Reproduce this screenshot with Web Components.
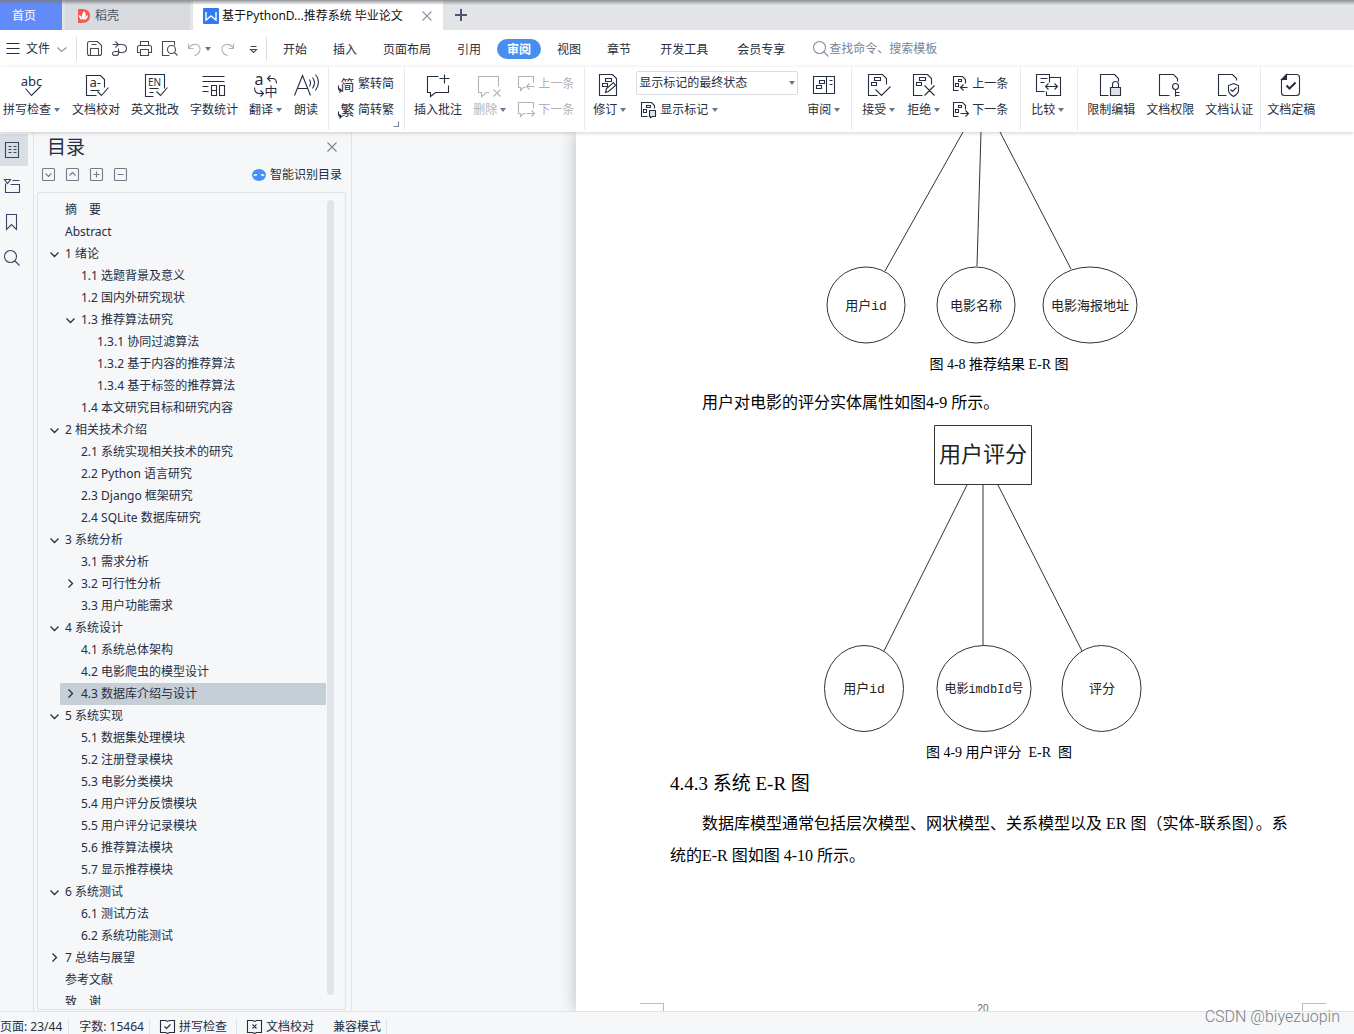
<!DOCTYPE html>
<html lang="zh-CN">
<head>
<meta charset="utf-8">
<title>WPS 文字</title>
<style>
html,body{margin:0;height:100%}
body{font:12px/18px "Noto Sans","Noto Sans CJK SC",sans-serif;color:#262e42;overflow:hidden;
--ink:#262e42;--line:#dfe2e9;--pane:#f5f7f9;--muted:#b1b4b9}
</style>
</head>
<body>
<wps-app></wps-app>
<script>
const BOX='M1 0h10q1 0 1 1v10q0 1-1 1H1q-1 0-1-1V1q0-1 1-1z';
const ICONS={
 abc:[24,'<text x="11" y="12" font-size="13" text-anchor="middle">abc</text><path d="M5 15l6 7 9-9"/>'],
 proof:[24,'<path d="M12 22H2V2h14l4 4v8M6 17h9M13 18l4 4 7-8"/><text x="5" y="13" font-size="13">a-</text>'],
 en:[24,'<path d="M10 23H2V1h19v14M6 15h9M6 19h4M13 18l4 4 7-8"/><text x="11" y="12" font-size="10" text-anchor="middle">EN</text>'],
 count:[24,'<path d="M0 3h22M0 8h22M0 13h6M0 18h6M9 12h5v10H9zM9 17h5M17 12h5v10h-5z"/>'],
 trans:[24,'<text x="0" y="11" font-size="16">a</text><text x="10" y="22" font-size="13">中</text><path d="M13 5h5q4 0 4 5M16 2l-3 3 3 3M0 14q0 6 5 6h4M6 17l3 3-3 3"/>'],
 read:[24,'<path d="M0 22L8 2l8 20M3 15h10M15 6q2 3 0 7M18 4q4 5 0 11M21 1q6 7 0 16"/>'],
 toSimp:[16,'<text x="2" y="13" font-size="14">简</text><path d="M0 9v3q0 2 3 2M1 12l2 2-2 2"/>'],
 toTrad:[16,'<text x="2" y="12" font-size="14">繁</text><path d="M0 9v3q0 2 3 2M1 12l2 2-2 2"/>'],
 note:[24,'<path d="M12 3H1v16h3v4l5-4h13v-7M18 1v9M13 5h10"/>'],
 noteDel:[24,'<path d="M11 19H8l-5 4v-4H0V3h20v10M15 16l7 7M22 16l-7 7"/>'],
 notePrev:[16,'<path d="M7 11H5l-3 3v-3H0V0h15v6M16 10H8M11 7l-3 3 3 3"/>'],
 noteNext:[16,'<path d="M7 11H5l-3 3v-3H0V0h15v6M8 11h8M13 8l3 3-3 3"/>'],
 revise:[24,'<path d="M1 1h13l4 4v17H1zM7 5h6v3H7zM4 10h5v3H4zM7 19l1-4 7-6 2 3-7 6z"/>'],
 marks:[16,'<path d="M7 14H1V0h10l3 3v3M6 3h4v2H6zM3 7h3v3H3z"/><path fill="#dfe3e9" d="M9 8h6v6h-3l-2 1v-1H9z"/>'],
 review:[24,'<path d="M1 3h21v17H1zM14 3v17M7 7h5v3H7zM4 12h5v3H4zM17 7h3M17 11h3"/>'],
 accept:[24,'<path d="M10 22H1V1h14l4 4v6M7 4h6v3H7zM4 9h5v3H4zM8 16l6 6 9-9"/>'],
 reject:[24,'<path d="M10 22H1V1h14l4 4v6M7 4h6v3H7zM4 9h5v3H4zM12 12l10 10M22 12L12 22"/>'],
 docPrev:[16,'<path d="M6 14H1V0h9l3 3v4M6 3h3v2H6zM3 7h3v3H3zM15 11H8M11 8l-3 3 3 3"/>'],
 docNext:[16,'<path d="M6 14H1V0h9l3 3v4M6 3h3v2H6zM3 7h3v3H3zM8 11h8M13 8l3 3-3 3"/>'],
 compare:[24,'<path d="M8 18H0V1h13v3M4 5h7M4 9h4M10 18v4h14V4H13v5M9 13h12M12 10l-3 3 3 3M18 10l3 3-3 3"/>'],
 lock:[24,'<path d="M9 22H1V1h14l4 4v3M13 14v-3q0-3 3-3t3 3v3"/><path fill="#dfe3e9" d="M11 14h10v8H11z"/>'],
 key:[24,'<path d="M11 22H1V1h14l4 4v3"/><circle cx="17" cy="13" r="3"/><path d="M17 16v7M17 19h4M17 22h4"/>'],
 cert:[24,'<path d="M9 22H1V1h14l4 4v2M16 10l5 2v5q0 3-5 6-5-3-5-6v-5zM13 16l2 2 4-4"/>'],
 final:[24,'<path d="M7 1h10q3 0 3 3v15q0 3-3 3H5q-3 0-3-3V7z"/><path fill="currentColor" d="M7 1v5H2z"/><path stroke-width="2" d="M7 12l3 3 6-6"/>'],
 save:[16,'<path d="M0 2q0-2 2-2h8l4 4v8q0 2-2 2H2q-2 0-2-2zM3 14V7h8v7M4 3h5"/>'],
 link:[16,'<path d="M0 3h9q5 0 5 4t-5 4H6M3 0l3 3-3 3M6 7v5q0 2-3 2t-3-2 3-2h4"/>'],
 print:[16,'<path d="M3 4V0h8v4M3 11H0V6q0-2 2-2h10q2 0 2 2v5h-3M3 8h8v6H3z"/>'],
 preview:[16,'<path d="M7 14H0V0h12v4"/><circle cx="9" cy="8" r="4"/><path d="M12 11l3 3"/>'],
 undo:[16,'<path d="M1 2v5h5M1 7q3-5 8-4 5 2 3 7-1 3-5 4"/>'],
 redo:[16,'<path d="M12 2v5H7M12 7Q9 2 4 3q-5 2-3 7 1 3 5 4"/>'],
 more:[16,'<path d="M4 5h6M4 8h6l-3 3z"/>'],
 menu:[16,'<path d="M1 2h13M1 7h13M1 12h13"/>'],
 chev:[12,'<path d="M1 4l4 4 5-4"/>'],
 down:[12,'<path stroke-width="1.3" d="M1 4l4 4 4-4"/>'],
 right:[12,'<path stroke-width="1.3" d="M3 1l4 4-4 4"/>'],
 find:[16,'<circle cx="6" cy="6" r="6"/><path d="M10 10l5 5"/>'],
 close:[12,'<path d="M1 1l9 9M10 1l-9 9"/>'],
 plus:[12,'<path stroke-width="2" d="M6 0v12M0 6h12"/>',1],
 word:[16,'<rect width="16" height="16" rx="1" fill="#2f7bf2" stroke="none"/><path stroke="#fff" stroke-width="1.4" d="M3 4v8l5-4 5 4V4"/>',1],
 docer:[14,'<path fill="#f4594c" stroke="none" d="M1 0h4q8 0 8 7t-8 7H1z"/><path fill="#fff" stroke="none" d="M7 2q3 3 1 6-1 2-2 3-3-4 1-9zM2 6q3 1 3 5-3-1-3-5zM11 6q0 4-4 5 0-3 4-5z"/>',1],
 toc:[16,'<path d="M1 0h13v15H1zM4 4h3M9 4h3M4 7h3M9 7h3M4 10h3M9 10h3"/>'],
 chapter:[16,'<path d="M0 1h6L3 5zM8 2h7M1 5v9h14V6H6"/>'],
 mark:[16,'<path d="M2 0h10v15l-5-5-5 5z"/>'],
 cDown:[14,`<path d="${BOX}M3 5l3 3 3-3"/>`],
 cUp:[14,`<path d="${BOX}M3 7l3-3 3 3"/>`],
 cPlus:[14,`<path d="${BOX}M3 6h6M6 3v6"/>`],
 cMinus:[14,`<path d="${BOX}M3 6h6"/>`],
 smart:[14,'<ellipse cx="7" cy="7" rx="7" ry="6" fill="#4391f3" stroke="none"/><path stroke="#fff" stroke-width="1.5" d="M2 8q1-2 3-1M9 7q2-1 3 1"/>',1],
 okBox:[16,'<path d="M0 1h5l2 1 2-1h5v12H9l-2 1-2-1H0zM4 7l2 2 4-4"/>'],
 noBox:[16,'<path d="M0 1h5l2 1 2-1h5v12H9l-2 1-2-1H0zM5 5l4 4M9 5l-4 4"/>'],
 corner:[8,'<path d="M6 1v5H1"/>']
};
const BTN='button{font:inherit;color:inherit;background:none;border:0;padding:0;margin:0;text-align:left;white-space:nowrap}';
function define(name,css,html){
  customElements.define(name,class extends HTMLElement{
    constructor(){super();this.attachShadow({mode:'open'})}
    connectedCallback(){this.shadowRoot.innerHTML='<style>*{box-sizing:border-box}'+BTN+css+'</style>'+(typeof html==='function'?html(this):html)}
  });
}
/* Line icons are drawn on whole units and shifted by half a unit so that hairlines stay crisp. */
define('ui-icon',':host{display:block;flex:none}svg{display:block;overflow:visible}text{fill:currentColor;stroke:none;font-family:"Noto Sans","Noto Sans CJK SC",sans-serif}',
 e=>{const[s,b,solid]=ICONS[e.getAttribute('name')];return `<svg width="${s}" height="${s}" viewBox="0 0 ${s} ${s}" fill="none" stroke="currentColor" stroke-width="1.1" aria-hidden="true"><g${solid?'':' transform="translate(.5 .5)"'}>${b}</g></svg>`});
define('ui-arrow',':host{display:block;flex:none;width:7px}i{display:block;width:0;border:3px solid transparent;border-top:4px solid #6c778c;border-bottom:0}','<i></i>');

define('app-tabs',`:host{display:flex;height:30px;background:#e2e4e8;position:relative;flex:none}
:host::after{content:"";position:absolute;inset:0 0 auto;height:5px;background:linear-gradient(#77797dcc,#8a8c9000)}
button{display:flex;align-items:center;height:30px;padding-top:2px}
.home{width:62px;padding-left:12px;background:#628bfa;color:#fff;margin-right:3px}
.docer{width:125px;padding-left:12px;gap:4px;background:#d8dadf;color:#4a5262;margin-right:3px}
.doc{width:250px;padding:2px 10px 0;gap:3px;background:#fff;color:#111}
.doc span{flex:1}.doc ui-icon:last-child{color:#8c96aa}
.new{padding:0 12px;color:#4b5670}`,
`<button class="home">首页</button><button class="docer"><ui-icon name="docer"></ui-icon>稻壳</button>
<button class="doc"><ui-icon name="word"></ui-icon><span>基于PythonD...推荐系统 毕业论文</span><ui-icon name="close"></ui-icon></button>
<button class="new" aria-label="新建"><ui-icon name="plus"></ui-icon></button>`);

define('menu-bar',`:host{display:flex;align-items:center;height:37px;background:#fff;flex:none;padding-left:5px}
.file{display:flex;align-items:center;gap:5px;line-height:20px}.file ui-icon:last-child{color:#8c93a0;margin-left:1px}
.sep{width:1px;height:24px;background:#dcdfe5}.file+.sep{margin-left:8px}
.quick{display:flex;align-items:center;gap:9px;padding:0 4px 0 10px;color:#454b58}
.undo{display:flex;align-items:center;gap:2px;color:var(--muted)}.off{color:var(--muted)}
nav{display:flex;gap:6px;padding-left:6px}
nav button{height:20px;padding:0 10px;border-radius:10px;line-height:22px}
nav .on{background:#468ff0;color:#fff;font-weight:700}
nav .wide{margin-left:3px}
label{display:flex;align-items:center;color:#8791a5;margin-left:18px}
input{font:inherit;border:0;padding:0;width:160px;background:none;outline:0}input::placeholder{color:#78839a;opacity:1}`,
`<button class="file"><ui-icon name="menu"></ui-icon>文件<ui-icon name="chev"></ui-icon></button><div class="sep"></div>
<div class="quick"><button aria-label="保存"><ui-icon name="save"></ui-icon></button><button aria-label="输出"><ui-icon name="link"></ui-icon></button><button aria-label="打印"><ui-icon name="print"></ui-icon></button><button aria-label="预览"><ui-icon name="preview"></ui-icon></button>
<button class="undo" aria-label="撤销"><ui-icon name="undo"></ui-icon><ui-arrow></ui-arrow></button><button class="off" aria-label="恢复"><ui-icon name="redo"></ui-icon></button><button aria-label="更多"><ui-icon name="more"></ui-icon></button></div><div class="sep"></div>
<nav><button>开始</button><button>插入</button><button>页面布局</button><button>引用</button><button class="on">审阅</button><button>视图</button><button>章节</button><button class="wide">开发工具</button><button class="wide">会员专享</button></nav>
<label><ui-icon name="find"></ui-icon><input type="search" placeholder="查找命令、搜索模板" aria-label="查找命令、搜索模板"></label>`);

define('big-tool',`:host{display:block;flex:none}:host([off]){color:var(--muted)}
button{display:flex;flex-direction:column;align-items:center;gap:4px}span{display:flex;align-items:center;gap:3px}`,
 e=>`<button><ui-icon name="${e.getAttribute('icon')}"></ui-icon><span><slot></slot>${e.hasAttribute('menu')?'<ui-arrow></ui-arrow>':''}</span></button>`);
define('small-tool',`:host{display:block}:host([off]){color:var(--muted)}button{display:flex;align-items:center;gap:4px;height:26px}`,
 e=>`<button><ui-icon name="${e.getAttribute('icon')}"></ui-icon><slot></slot>${e.hasAttribute('menu')?'<ui-arrow></ui-arrow>':''}</button>`);
define('tool-group',`:host{display:flex;position:relative;gap:11px;height:62px;padding:5px 10px 0 9px;border-right:1px solid #e7e9ed;flex:none}
:host([first]){padding-left:3px}:host([last]){border:0;padding-left:6px}:host([loose]){padding-left:10px;padding-right:12px}:host([cert]){padding-left:9px;padding-right:7px}:host([mid]){gap:9px;padding-left:8px}
:host([corner]) .c{position:absolute;right:4px;bottom:2px;color:#7b8497}`,
 e=>`<slot></slot>${e.hasAttribute('corner')?'<ui-icon class="c" name="corner"></ui-icon>':''}`);
define('tool-stack',':host{display:flex;flex-direction:column;margin-top:-2px}','<slot></slot>');
define('mark-select',`:host{display:flex;align-items:center;position:relative;width:162px;height:24px;margin-bottom:2px}
select{appearance:none;font:inherit;color:inherit;width:100%;height:24px;border:1px solid #d9dce3;border-radius:2px;background:#fff;padding:0 20px 0 2px}
ui-arrow{position:absolute;right:2px;pointer-events:none}`,
 '<select aria-label="标记显示方式"><option>显示标记的最终状态</option><option>最终状态</option></select><ui-arrow></ui-arrow>');

define('tool-ribbon',`:host{display:flex;height:65px;padding-top:1px;background:#fff;box-shadow:0 1px 4px #0000002e;position:relative;z-index:2;flex:none}.pad{padding-left:4px}`,
`<tool-group first><big-tool icon="abc" menu>拼写检查</big-tool><big-tool icon="proof">文档校对</big-tool><big-tool icon="en">英文批改</big-tool><big-tool icon="count">字数统计</big-tool><big-tool icon="trans" menu>翻译</big-tool><big-tool icon="read">朗读</big-tool></tool-group>
<tool-group corner><tool-stack><small-tool icon="toSimp">繁转简</small-tool><small-tool icon="toTrad">简转繁</small-tool></tool-stack></tool-group>
<tool-group><big-tool icon="note">插入批注</big-tool><big-tool icon="noteDel" menu off>删除</big-tool><tool-stack><small-tool icon="notePrev" off>上一条</small-tool><small-tool icon="noteNext" off>下一条</small-tool></tool-stack></tool-group>
<tool-group mid><big-tool icon="revise" menu>修订</big-tool><tool-stack><mark-select></mark-select><small-tool class="pad" icon="marks" menu>显示标记</small-tool></tool-stack><big-tool icon="review" menu>审阅</big-tool></tool-group>
<tool-group loose><big-tool icon="accept" menu>接受</big-tool><big-tool icon="reject" menu>拒绝</big-tool><tool-stack><small-tool icon="docPrev">上一条</small-tool><small-tool icon="docNext">下一条</small-tool></tool-stack></tool-group>
<tool-group loose><big-tool icon="compare" menu>比较</big-tool></tool-group>
<tool-group cert><big-tool icon="lock">限制编辑</big-tool><big-tool icon="key">文档权限</big-tool><big-tool icon="cert">文档认证</big-tool></tool-group>
<tool-group last><big-tool icon="final">文档定稿</big-tool></tool-group>`);

define('side-rail',`:host{display:flex;flex-direction:column;gap:4px;width:34px;padding-top:2px;background:var(--pane);border-right:1px solid var(--line);flex:none}
button{display:flex;align-items:center;height:32px;width:28px;padding-left:4px;color:#3a4560}.on{background:#d9dee5}`,
`<button class="on" aria-label="目录"><ui-icon name="toc"></ui-icon></button><button aria-label="章节"><ui-icon name="chapter"></ui-icon></button><button aria-label="书签"><ui-icon name="mark"></ui-icon></button><button aria-label="查找"><ui-icon name="find"></ui-icon></button>`);

define('toc-item',`:host{display:block;flex:none}
button{display:flex;align-items:center;gap:4px;width:100%;height:22px;padding-left:5px;white-space:pre}
:host([level="0"]){margin-left:6px}:host([level="1"]){margin-left:22px}:host([level="2"]){margin-left:38px}
:host([selected]) button{background:#c6ced6}i{width:12px}`,
 e=>{const s=e.getAttribute('state');return `<button>${s?`<ui-icon name="${s}"></ui-icon>`:'<i></i>'}<slot></slot></button>`});
const TOC=[[0,'','摘　要'],[0,'','Abstract'],[0,'down','1 绪论'],[1,'','1.1 选题背景及意义'],[1,'','1.2 国内外研究现状'],[1,'down','1.3 推荐算法研究'],[2,'','1.3.1 协同过滤算法'],[2,'','1.3.2 基于内容的推荐算法'],[2,'','1.3.4 基于标签的推荐算法'],[1,'','1.4 本文研究目标和研究内容'],[0,'down','2 相关技术介绍'],[1,'','2.1 系统实现相关技术的研究'],[1,'','2.2 Python 语言研究'],[1,'','2.3 Django 框架研究'],[1,'','2.4 SQLite 数据库研究'],[0,'down','3 系统分析'],[1,'','3.1 需求分析'],[1,'right','3.2 可行性分析'],[1,'','3.3 用户功能需求'],[0,'down','4 系统设计'],[1,'','4.1 系统总体架构'],[1,'','4.2 电影爬虫的模型设计'],[1,'right','4.3 数据库介绍与设计',1],[0,'down','5 系统实现'],[1,'','5.1 数据集处理模块'],[1,'','5.2 注册登录模块'],[1,'','5.3 电影分类模块'],[1,'','5.4 用户评分反馈模块'],[1,'','5.5 用户评分记录模块'],[1,'','5.6 推荐算法模块'],[1,'','5.7 显示推荐模块'],[0,'down','6 系统测试'],[1,'','6.1 测试方法'],[1,'','6.2 系统功能测试'],[0,'right','7 总结与展望'],[0,'','参考文献'],[0,'','致　谢']];
define('toc-pane',`:host{display:flex;flex-direction:column;width:318px;padding:0 5px 0 3px;background:var(--pane);border-right:1px solid var(--line);flex:none;min-height:0}
header{display:flex;align-items:center;justify-content:space-between;height:30px;padding:0 8px 0 10px}
h2{margin:0;font-size:19px;line-height:28px;font-weight:400}header ui-icon{color:#7b8496}
.bar{display:flex;align-items:center;gap:10px;height:30px;padding:0 4px 5px 5px;color:#737a88}
.bar .smart{display:flex;align-items:center;gap:4px;margin-left:auto;color:var(--ink)}
.box{flex:1;min-height:0;display:flex;border:1px solid var(--line);border-radius:2px;padding:6px 11px 4px 0;margin-bottom:1px}
.list{flex:1;display:flex;flex-direction:column;overflow:hidden}
.thumb{width:7px;margin:1px 0 10px 1px;background:#e2e4eb;border-radius:4px}`,
`<header><h2>目录</h2><button aria-label="关闭"><ui-icon name="close"></ui-icon></button></header>
<div class="bar"><button aria-label="展开"><ui-icon name="cDown"></ui-icon></button><button aria-label="收起"><ui-icon name="cUp"></ui-icon></button><button aria-label="增加"><ui-icon name="cPlus"></ui-icon></button><button aria-label="减少"><ui-icon name="cMinus"></ui-icon></button><button class="smart"><ui-icon name="smart"></ui-icon>智能识别目录</button></div>
<div class="box"><div class="list">${TOC.map(([l,s,t,on])=>`<toc-item level="${l}" state="${s}"${on?' selected':''}>${t}</toc-item>`).join('')}</div><div class="thumb"></div></div>`);

define('er-diagram',`:host{display:block}svg{display:block;width:100%;fill:none;stroke:#333}text{fill:#222;stroke:none;text-anchor:middle;font:13px "Liberation Mono","Noto Sans CJK SC",sans-serif}.t{font-size:22px}.s{font-size:12px}`,
 e=>e.getAttribute('kind')==='result'?
`<svg viewBox="664 132 638 217"><path d="M963 132L885 271M981 132L977 266M1000 132L1071 269"/><ellipse cx="866" cy="305" rx="39" ry="38"/><ellipse cx="976" cy="305" rx="39" ry="38"/><ellipse cx="1090" cy="305" rx="47" ry="38"/><text x="866" y="310">用户id</text><text x="976" y="310">电影名称</text><text x="1090" y="310">电影海报地址</text></svg>`:
`<svg viewBox="664 419 638 318"><path d="M934.5 425.5h97v59h-97zM967 485L884 651M983 485V645M998 485L1082 651"/><ellipse cx="864" cy="688.5" rx="39.5" ry="43"/><ellipse cx="984" cy="688.5" rx="47" ry="43"/><ellipse cx="1101.5" cy="688.5" rx="39.5" ry="43"/><text class="t" x="983" y="462">用户评分</text><text x="864" y="693">用户id</text><text class="s" x="984" y="693">电影imdbId号</text><text x="1102" y="693">评分</text></svg>`);

define('doc-page',`:host{display:flex;flex-direction:column;width:814px;flex:none;padding:0 88px;background:#fff;box-shadow:0 0 16px #0000003d;color:#000;font:16px/32px "Liberation Serif","Noto Sans CJK SC",serif;overflow:hidden}
figure{margin:0}figcaption{font-size:14px;text-align:center;padding-left:32px;white-space:pre}
p{margin:6px 6px 0;text-indent:32px}h3{margin:0 6px;font-size:19px;line-height:30px;font-weight:400}h3+p{margin-top:9px}
footer{display:flex;justify-content:space-between;margin:131px -24px 0;height:120px;font:10px/12px "Liberation Sans",sans-serif;color:#666}
footer i{width:24px;border-top:1px solid #bbb;border-right:1px solid #bbb}footer i:last-child{border-right:0;border-left:1px solid #bbb}`,
`<figure><er-diagram kind="result"></er-diagram><figcaption>图 4-8 推荐结果 E-R 图</figcaption></figure>
<p>用户对电影的评分实体属性如图4-9 所示。</p>
<figure><er-diagram kind="score"></er-diagram><figcaption>图 4-9 用户评分  E-R  图</figcaption></figure>
<h3>4.4.3 系统 E-R 图</h3>
<p>数据库模型通常包括层次模型、网状模型、关系模型以及 ER 图（实体-联系图）。系统的E-R 图如图 4-10 所示。</p>
<footer><i></i><span>20</span><i></i></footer>`);
define('doc-canvas',':host{display:flex;flex:1;min-width:0;background:#f5f7f9;padding-left:224px;overflow:hidden}','<doc-page></doc-page>');

define('status-bar',`:host{display:flex;align-items:center;height:23px;flex:none;background:#f5f7f9;border-top:1px solid var(--line);padding-top:7px;white-space:nowrap}
span,button{display:flex;align-items:center;gap:3px;border-right:1px solid var(--line);padding:0 5px 0 10px;height:15px}
.page{padding:0 6px 0 0}button{padding-right:9px}.n{border:0}.m{padding-right:5px}`,
`<span class="page">页面: 23/44</span><span>字数: 15464</span><button><ui-icon name="okBox"></ui-icon>拼写检查</button><button class="n"><ui-icon name="noBox"></ui-icon>文档校对</button><button class="m">兼容模式</button>`);

define('wps-app',`:host{display:flex;flex-direction:column;height:100vh;position:relative;overflow:hidden}
main{display:flex;flex:1;min-height:0}
.mark{position:absolute;right:14px;bottom:6px;z-index:3;font:16px/22px Roboto,sans-serif;font-weight:300;color:#7d7f84}`,
`<app-tabs></app-tabs><menu-bar></menu-bar><tool-ribbon></tool-ribbon><main><side-rail></side-rail><toc-pane></toc-pane><doc-canvas></doc-canvas></main><status-bar></status-bar><div class="mark">CSDN @biyezuopin</div>`);
</script>
</body>
</html>
